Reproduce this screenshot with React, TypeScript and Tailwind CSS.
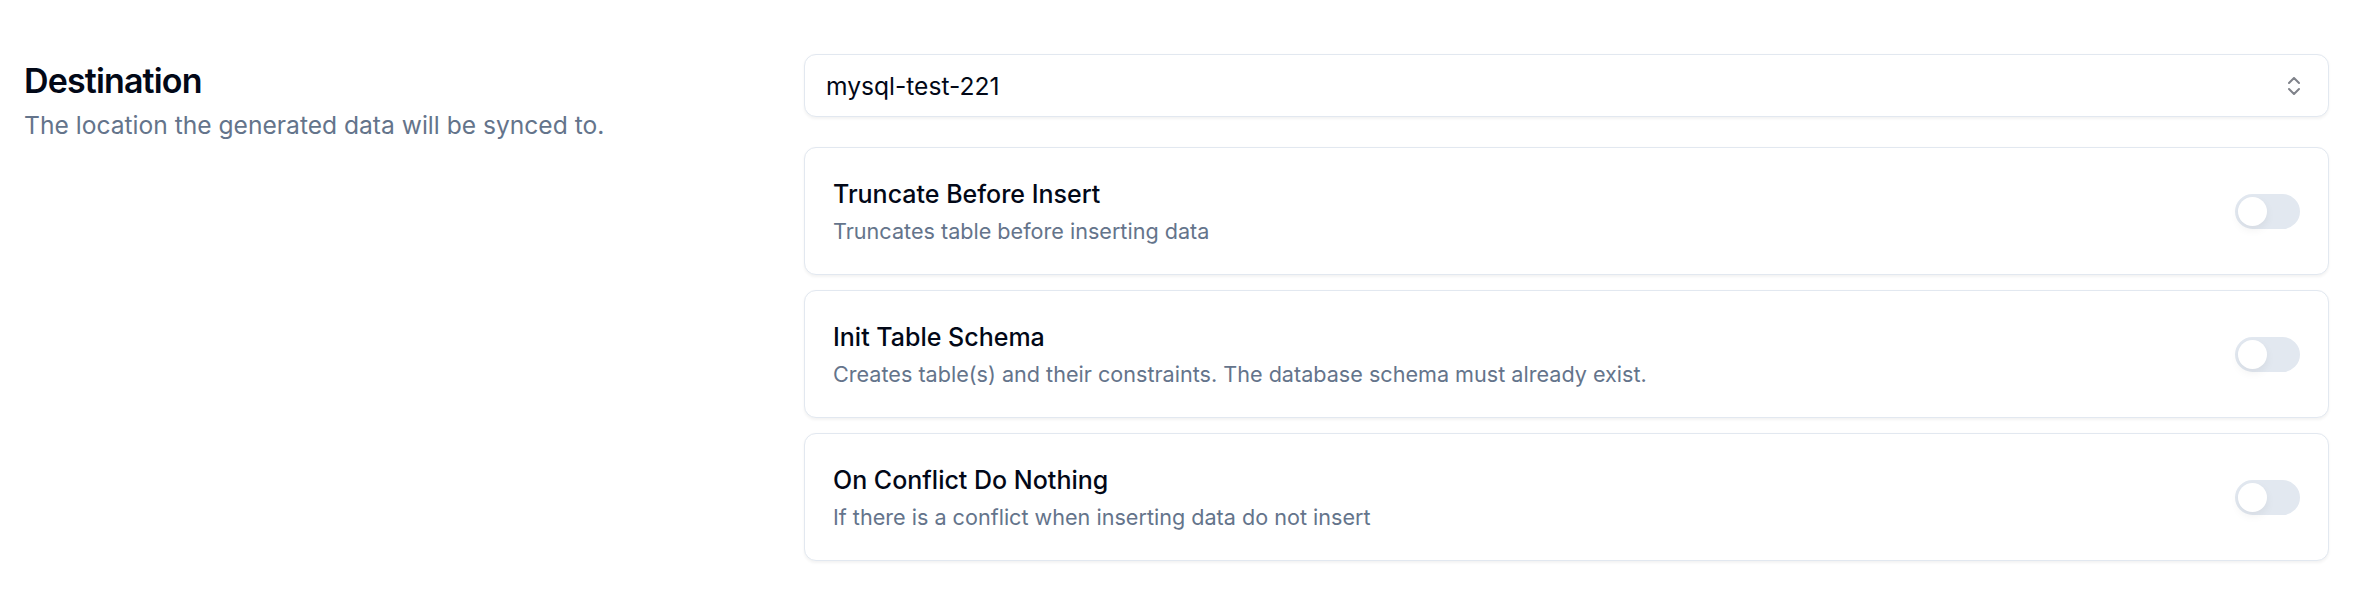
import { ChevronsUpDown } from 'lucide-react'

const opciones = [
  { titulo: 'Truncate Before Insert', descripcion: 'Truncates table before inserting data' },
  {
    titulo: 'Init Table Schema',
    descripcion: 'Creates table(s) and their constraints. The database schema must already exist.',
  },
  { titulo: 'On Conflict Do Nothing', descripcion: 'If there is a conflict when inserting data do not insert' },
]

function Toggle() {
  return (
    <div className="flex h-[35px] w-[65px] shrink-0 items-center rounded-full border-[3px] border-[#e2e8f0] bg-[#e2e8f0]">
      <div className="h-[29px] w-[29px] rounded-full bg-white shadow-[0_4px_10px_rgba(0,0,0,0.06)]" />
    </div>
  )
}

export default function App() {
  return (
    <div className="min-h-screen bg-white font-['Inter',sans-serif] text-[#020817]">
      <div className="flex pl-[24px] pr-[43px] pt-[54px]">
        <div className="w-[780px] shrink-0 pt-[7px]">
          <h2 className="text-[34px] font-semibold leading-[40px] tracking-[-0.85px] text-[#020817]">Destination</h2>
          <p className="mt-[6px] text-[24.6px] leading-[36px] text-[#64748b]">
            The location the generated data will be synced to.
          </p>
        </div>

        <div className="flex flex-1 flex-col">
          <div className="flex h-[63px] items-center justify-between rounded-[12px] border-[1.5px] border-[#e2e8f0] bg-white pl-[21px] pr-[22px] shadow-[0_1.5px_3px_rgba(0,0,0,0.05)]">
            <span className="text-[24.6px] leading-[36px]">mysql-test-221</span>
            <ChevronsUpDown className="h-[24px] w-[24px] text-[#020817] opacity-50" strokeWidth={2} />
          </div>

          <div className="mt-[30px] flex flex-col gap-[15px]">
            {opciones.map(o => (
              <div
                key={o.titulo}
                className="flex h-[128px] items-center justify-between rounded-[12px] border-[1.5px] border-[#e2e8f0] bg-white pl-[28px] pr-[28px] shadow-[0_1.5px_3px_rgba(0,0,0,0.05)]"
              >
                <div className="flex flex-col gap-[4px]">
                  <span className="text-[25px] font-medium leading-[36px]">{o.titulo}</span>
                  <span className="text-[21.6px] leading-[30px] text-[#64748b]">{o.descripcion}</span>
                </div>
                <Toggle />
              </div>
            ))}
          </div>
        </div>
      </div>
    </div>
  )
}
